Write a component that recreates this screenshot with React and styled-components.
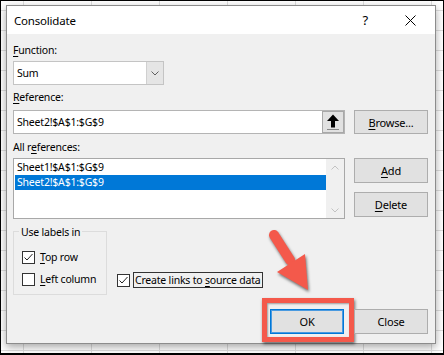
import React from 'react'
import styled, { createGlobalStyle } from 'styled-components'

const GlobalStyle = createGlobalStyle`
  html, body {
    margin: 0;
    padding: 0;
    background: #fff;
  }
  body {
    font-family: "Noto Sans", "Open Sans", "Liberation Sans", sans-serif;
    font-size: 10.5px;
    letter-spacing: -0.2px;
    color: #000;
  }
`

const Frame = styled.div`
  position: relative;
  width: 444px;
  height: 355px;
  box-sizing: border-box;
  border: 1px solid #000;
  border-bottom-width: 2px;
  padding: 4px 0 0 5px;
  background-color: #fff;
  background-image:
    linear-gradient(to right, #dedede 1px, transparent 1px),
    linear-gradient(to bottom, #dedede 1px, transparent 1px);
  background-size: 68px 20px;
  background-position: 22px 9px;
  overflow: hidden;
`

const Dialog = styled.div`
  width: 430px;
  height: 339px;
  box-sizing: border-box;
  border: 1px solid #8c8c8c;
  background: #f0f0f0;
  box-shadow: 0 3px 8px rgba(0, 0, 0, 0.35);
  display: flex;
  flex-direction: column;
`

const TitleBar = styled.div`
  height: 28px;
  background: #fff;
  display: flex;
  align-items: center;
  padding: 0 19px 0 7px;
`

const Title = styled.div`
  flex: 1;
  font-size: 11.5px;
`

const TitleTools = styled.div`
  display: flex;
  align-items: center;
  gap: 37px;
`

const Help = styled.span`
  font-size: 13px;
  line-height: 1;
`

const Body = styled.div`
  flex: 1;
  padding: 8px 7px 9px 6px;
  display: flex;
  flex-direction: column;
`

const FieldLabel = styled.div`
  height: 16px;
  line-height: 16px;
  margin-top: ${p => p.$top || 0}px;
  margin-bottom: ${p => p.$bottom || 0}px;
`

const Key = styled.u`
  text-decoration: underline;
  text-underline-offset: 2px;
`

const Select = styled.div`
  width: 151px;
  height: 24px;
  box-sizing: border-box;
  border: 1px solid #c4c4c4;
  background: #fff;
  display: flex;
`

const SelectValue = styled.div`
  flex: 1;
  padding-left: 3px;
  line-height: 22px;
`

const SelectButton = styled.div`
  width: 16px;
  background: #e5e5e5;
  border-left: 1px solid #d0d0d0;
  display: flex;
  align-items: center;
  justify-content: center;
`

const Row = styled.div`
  display: grid;
  grid-template-columns: 332px 74px;
  column-gap: 9px;
  align-items: start;
`

const RefInput = styled.div`
  height: 24px;
  box-sizing: border-box;
  border: 1px solid #b4b4b4;
  background: #fff;
  display: flex;
`

const RefText = styled.div`
  flex: 1;
  padding-left: 3px;
  line-height: 22px;
`

const PickButton = styled.div`
  width: 22px;
  box-sizing: border-box;
  border: 1px solid #a8a8a8;
  background: #e1e1e1;
  display: flex;
  align-items: center;
  justify-content: center;
`

const Button = styled.div`
  position: relative;
  height: ${p => p.$h || 25}px;
  box-sizing: border-box;
  border: 1px solid ${p => (p.$default ? '#0078d7' : '#adadad')};
  background: #e1e1e1;
  display: flex;
  align-items: center;
  justify-content: center;
  width: 74px;
  font-size: 11px;
`

const ListBox = styled.div`
  height: 61px;
  box-sizing: border-box;
  border: 1px solid #a8a8a8;
  background: #fff;
  display: flex;
`

const Items = styled.div`
  flex: 1;
  padding: 1px 0 0 1px;
`

const Item = styled.div`
  height: 15px;
  line-height: 15px;
  padding-left: 2px;
  background: ${p => (p.$selected ? '#0078d7' : 'transparent')};
  color: ${p => (p.$selected ? '#fff' : '#000')};
`

const ScrollBar = styled.div`
  width: 18px;
  background: #f0f0f0;
  display: flex;
  flex-direction: column;
  justify-content: space-between;
  align-items: center;
  padding: 6px 0 5px;
`

const SideButtons = styled.div`
  display: flex;
  flex-direction: column;
  gap: 9px;
`

const OptionsRow = styled.div`
  margin-top: 12px;
  display: flex;
  align-items: flex-end;
  gap: 10px;
`

const GroupBox = styled.div`
  width: 94px;
  height: 64px;
  box-sizing: border-box;
  border: 1px solid #dcdcdc;
  padding: 0 0 6px 8px;
  display: flex;
  flex-direction: column;
`

const Legend = styled.div`
  align-self: flex-start;
  margin: -8px 0 0 -3px;
  padding: 0 2px;
  height: 16px;
  line-height: 16px;
  background: #f0f0f0;
`

const Checks = styled.div`
  margin-top: 8px;
  display: flex;
  flex-direction: column;
  gap: 4px;
`

const CheckRow = styled.div`
  height: 18px;
  display: flex;
  align-items: center;
  gap: 3px;
  padding-bottom: ${p => p.$pad || 0}px;
`

const Box = styled.div`
  width: 13px;
  height: 13px;
  box-sizing: border-box;
  border: 1px solid #333;
  background: #fff;
  display: flex;
  align-items: center;
  justify-content: center;
`

const CheckText = styled.span`
  padding: 0 1px;
  line-height: 14px;
  border: 1px solid ${p => (p.$focus ? '#333' : 'transparent')};
`

const Footer = styled.div`
  margin-top: auto;
  display: flex;
  justify-content: flex-end;
  gap: 10px;
`

const OkButton = styled(Button)`
  box-shadow: inset 0 0 0 1px #4a9ae0;

  &::after {
    content: '';
    position: absolute;
    top: -12px;
    left: -9px;
    right: -11px;
    bottom: -9px;
    border: 5px solid #f4594b;
    box-shadow: 1px 2px 3px rgba(0, 0, 0, 0.55), inset 1px 1px 2px rgba(0, 0, 0, 0.35);
  }
`

const Arrow = styled.svg`
  position: absolute;
  left: 262px;
  top: 222px;
  filter: drop-shadow(1px 2px 1.5px rgba(0, 0, 0, 0.55));
`

function Check({ checked }) {
  return (
    <Box>
      {checked && (
        <svg width="11" height="11" viewBox="0 0 11 11">
          <polyline points="1.5,5.5 4,8 9.5,2" fill="none" stroke="#222" strokeWidth="1" />
        </svg>
      )}
    </Box>
  )
}

function Chevron({ up, color = '#606060' }) {
  return (
    <svg width="8" height="5" viewBox="0 0 8 5">
      <polyline
        points={up ? '0.5,4.5 4,1 7.5,4.5' : '0.5,0.5 4,4 7.5,0.5'}
        fill="none"
        stroke={color}
        strokeWidth="1"
      />
    </svg>
  )
}

export default function App() {
  return (
    <Frame>
      <GlobalStyle />
      <Dialog>
        <TitleBar>
          <Title>Consolidate</Title>
          <TitleTools>
            <Help>?</Help>
            <svg width="11" height="11" viewBox="0 0 11 11">
              <path d="M0.5 0.5 L10.5 10.5 M10.5 0.5 L0.5 10.5" stroke="#000" strokeWidth="1" />
            </svg>
          </TitleTools>
        </TitleBar>
        <Body>
          <FieldLabel $bottom={3}><Key>F</Key>unction:</FieldLabel>
          <Select>
            <SelectValue>Sum</SelectValue>
            <SelectButton><Chevron /></SelectButton>
          </Select>

          <FieldLabel $top={4} $bottom={5}><Key>R</Key>eference:</FieldLabel>
          <Row>
            <RefInput>
              <RefText>Sheet2!$A$1:$G$9</RefText>
              <PickButton>
                <svg width="16" height="18" viewBox="0 0 16 18">
                  <path d="M8 1.5 L14 8 L10 8 L10 14.5 L6 14.5 L6 8 L2 8 Z" fill="#000" />
                  <line x1="2" y1="16.5" x2="14" y2="16.5" stroke="#888" strokeWidth="1" />
                </svg>
              </PickButton>
            </RefInput>
            <Button $h={24}><span><Key>B</Key>rowse...</span></Button>
          </Row>

          <FieldLabel $top={5} $bottom={3}>All r<Key>e</Key>ferences:</FieldLabel>
          <Row>
            <ListBox>
              <Items>
                <Item>Sheet1!$A$1:$G$9</Item>
                <Item $selected>Sheet2!$A$1:$G$9</Item>
              </Items>
              <ScrollBar>
                <Chevron up color="#c2c2c2" />
                <Chevron color="#c2c2c2" />
              </ScrollBar>
            </ListBox>
            <SideButtons>
              <Button><span><Key>A</Key>dd</span></Button>
              <Button><span><Key>D</Key>elete</span></Button>
            </SideButtons>
          </Row>

          <OptionsRow>
            <GroupBox>
              <Legend>Use labels in</Legend>
              <Checks>
                <CheckRow>
                  <Check checked />
                  <CheckText><Key>T</Key>op row</CheckText>
                </CheckRow>
                <CheckRow>
                  <Check />
                  <CheckText><Key>L</Key>eft column</CheckText>
                </CheckRow>
              </Checks>
            </GroupBox>
            <CheckRow $pad={6}>
              <Check checked />
              <CheckText $focus>Create links to <Key>s</Key>ource data</CheckText>
            </CheckRow>
          </OptionsRow>

          <Footer>
            <OkButton $default>OK</OkButton>
            <Button>Close</Button>
          </Footer>
        </Body>
      </Dialog>

      <Arrow width="60" height="76" viewBox="0 0 60 76">
        <line x1="11" y1="12" x2="27" y2="37" stroke="#f4594b" strokeWidth="10" strokeLinecap="round" />
        <polygon points="14,49 42,31 45,67" fill="#f4594b" />
      </Arrow>
    </Frame>
  )
}
